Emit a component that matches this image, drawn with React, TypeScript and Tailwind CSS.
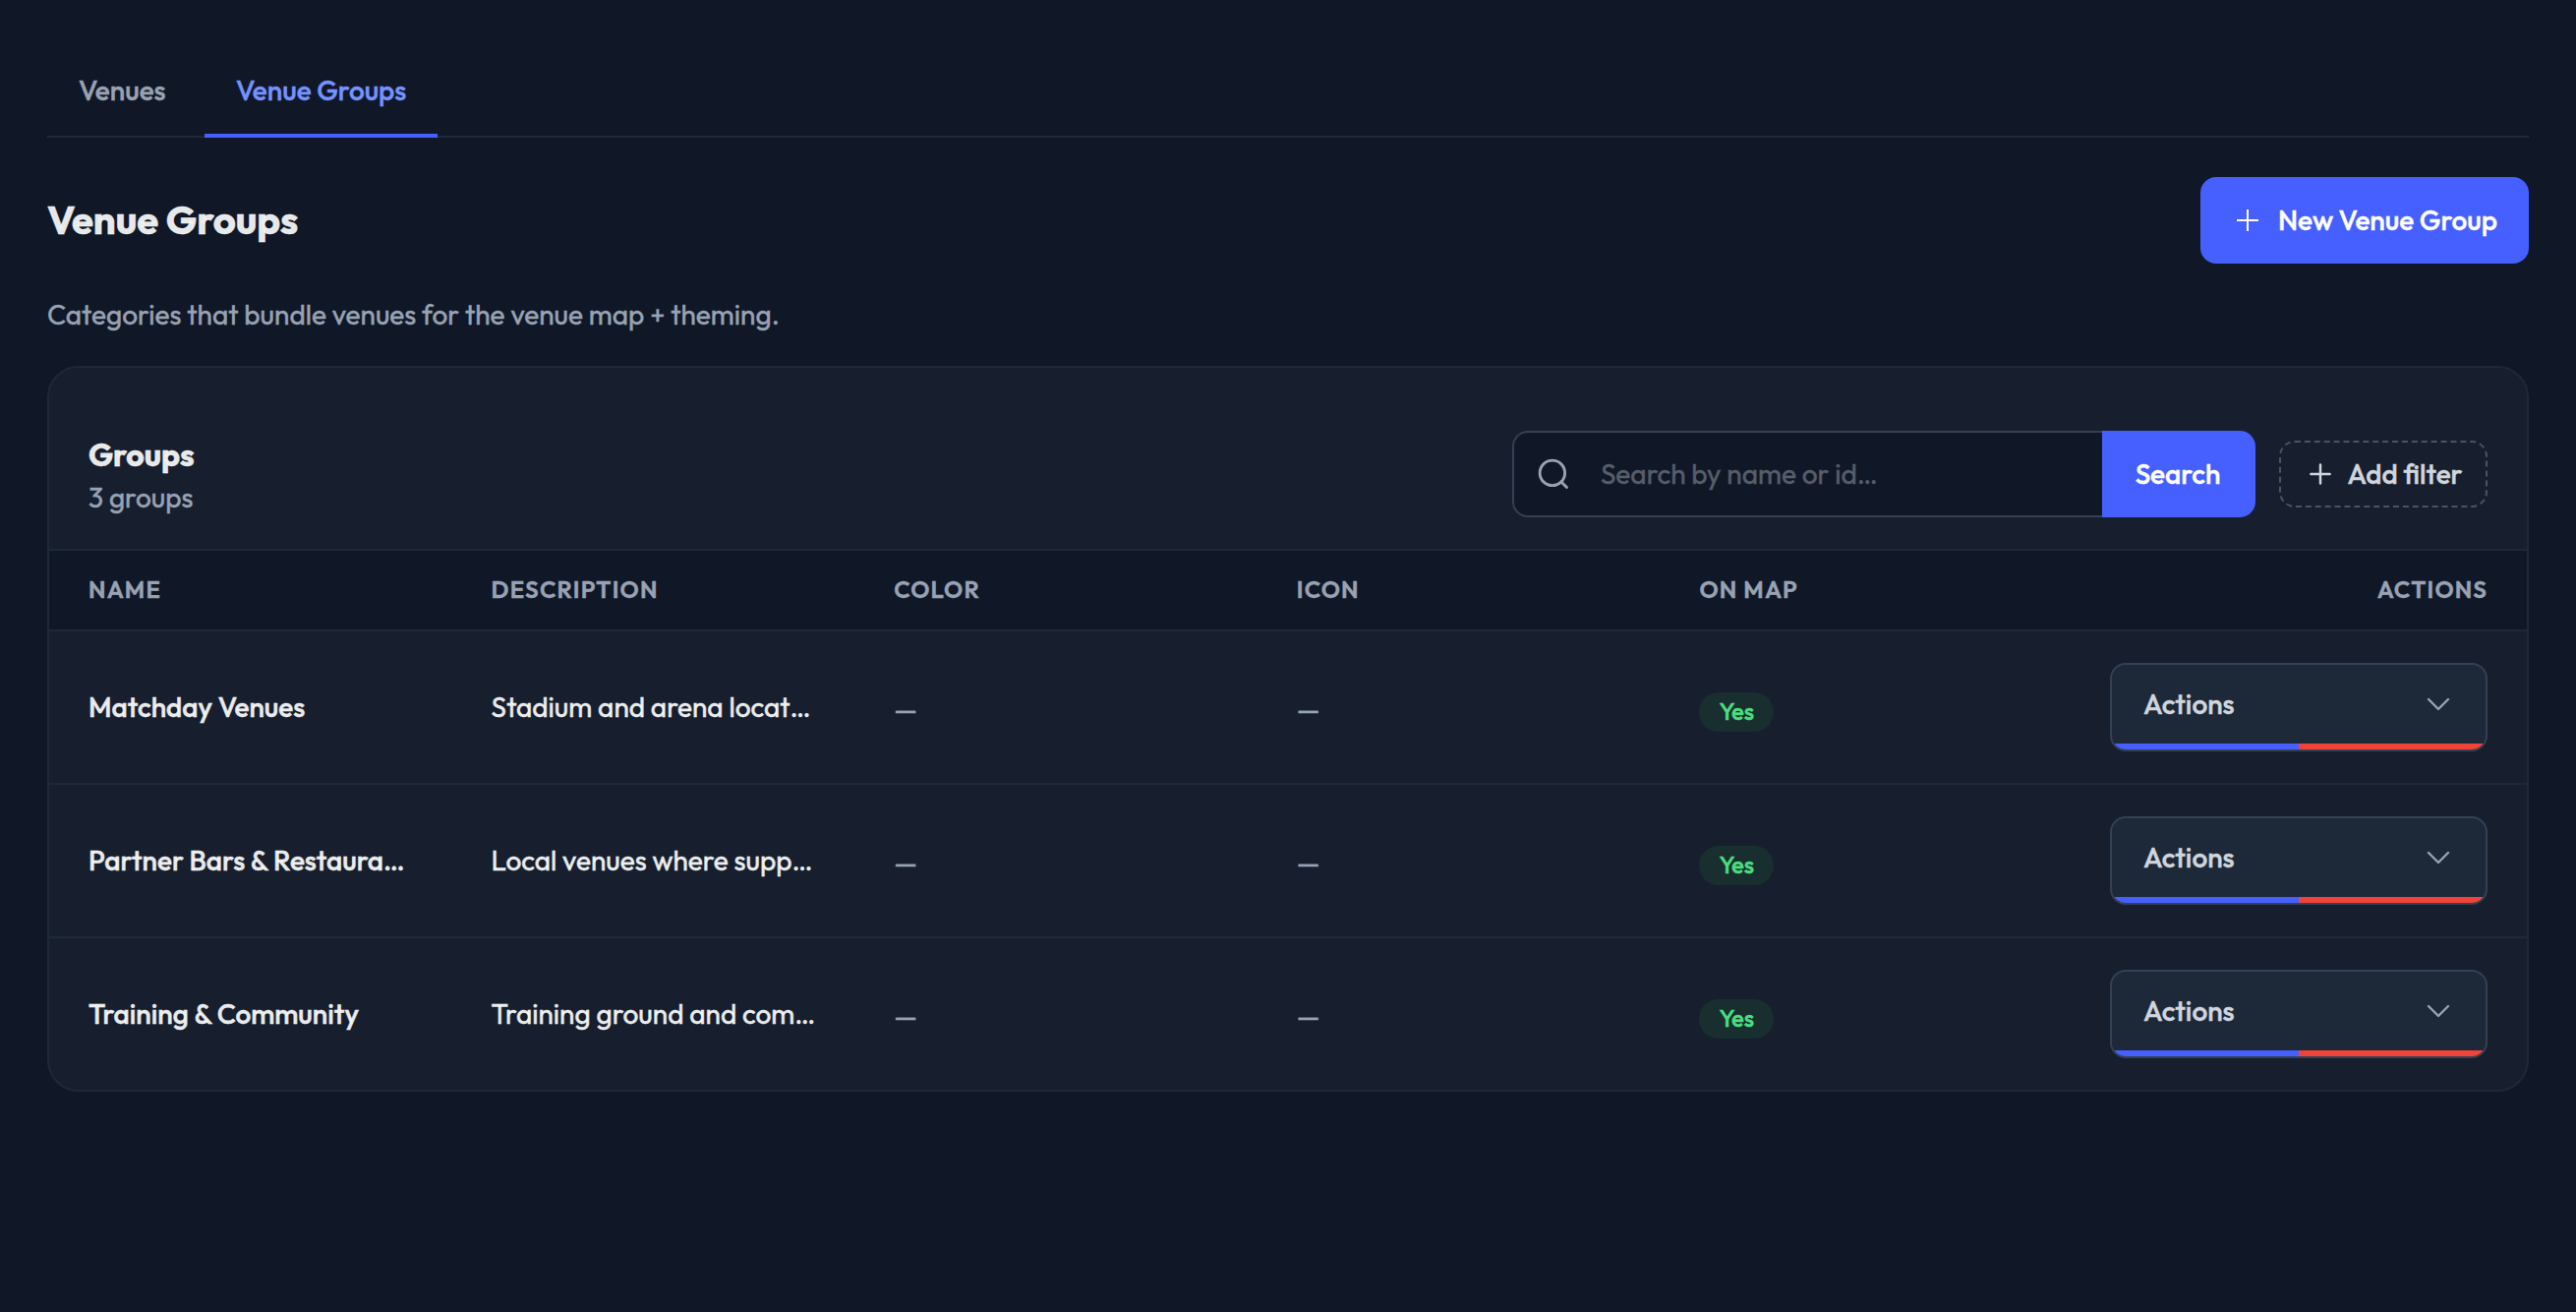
import type { ReactNode } from "react"

const tabs = [
  { label: "Venues", active: false },
  { label: "Venue Groups", active: true },
]

const groups = [
  { name: "Matchday Venues", description: "Stadium and arena locat…" },
  { name: "Partner Bars & Restaura…", description: "Local venues where supp…" },
  { name: "Training & Community", description: "Training ground and com…" },
]

const columns = ["Name", "Description", "Color", "Icon", "On map"]

function PlusIcon({ round = false }: { round?: boolean }) {
  return (
    <svg
      className="size-8 shrink-0"
      viewBox="0 0 32 32"
      fill="none"
      stroke="currentColor"
      strokeWidth={round ? 2.5 : 2}
    >
      <path d={round ? "M16 6.4v19.2M6.4 16h19.2" : "M16 5v22M5 16h22"} strokeLinecap={round ? "round" : "butt"} />
    </svg>
  )
}

function SearchIcon() {
  return (
    <svg className="size-9 shrink-0 text-[#98a2b3]" viewBox="0 0 20 20" fill="none" stroke="currentColor" strokeWidth="1.6">
      <circle cx="9.375" cy="9.375" r="7.083" />
      <path d="M14.4 14.4l3.1 3.1" strokeLinecap="round" />
    </svg>
  )
}

function ChevronDown() {
  return (
    <svg className="size-8 shrink-0 text-[#98a2b3]" viewBox="0 0 24 24" fill="none" stroke="currentColor" strokeWidth="1.8">
      <path d="m19.5 8.25-7.5 7.5-7.5-7.5" strokeLinecap="round" strokeLinejoin="round" />
    </svg>
  )
}

function ActionsButton() {
  return (
    <button className="relative flex h-[90px] w-[384px] items-center justify-between overflow-hidden rounded-2xl border-2 border-[#344054] bg-[#1d2939] px-8 pb-1.5 font-medium text-[#d0d5dd]">
      Actions
      <ChevronDown />
      <span className="absolute inset-x-0 bottom-0 flex h-1.5">
        <span className="flex-1 bg-[#465fff]" />
        <span className="flex-1 bg-[#f04438]" />
      </span>
    </button>
  )
}

function Cell({ children, className = "" }: { children: ReactNode; className?: string }) {
  return <div className={`flex items-center px-10 whitespace-nowrap ${className}`}>{children}</div>
}

export default function App() {
  return (
    <div className="min-h-screen bg-[#101828] px-12 pt-12 font-['Outfit',sans-serif] text-[28px] leading-10 text-white/90 [-webkit-text-stroke:0.4px]">
      {/* Tabs */}
      <nav className="flex h-[92px] gap-[7.4px] border-b-2 border-[#1d2939]">
        {tabs.map((tab) => (
          <button
            key={tab.label}
            className={
              tab.active
                ? "-mb-0.5 border-b-4 border-[#465fff] px-8 font-medium text-[#7592ff]"
                : "-mb-0.5 border-b-4 border-transparent px-8 font-medium text-[#98a2b3]"
            }
          >
            {tab.label}
          </button>
        ))}
      </nav>

      {/* Page header */}
      <div className="mt-10 flex h-[88px] items-center justify-between">
        <h1 className="pb-0.5 text-[40px] leading-[56px] font-bold">Venue Groups</h1>
        <button className="flex h-[88px] w-[334px] items-center justify-center gap-[15px] rounded-2xl bg-[#465fff] font-medium whitespace-nowrap text-white">
          <PlusIcon />
          New Venue Group
        </button>
      </div>
      <p className="mt-8 text-[#98a2b3]">Categories that bundle venues for the venue map + theming.</p>

      {/* Groups card */}
      <section className="mt-8 overflow-hidden rounded-[32px] border-2 border-[#1d2939] bg-[#171f2e]">
        <header className="flex justify-between px-10 pt-16 pb-8">
          <div>
            <h2 className="text-[32px] leading-[48px] font-bold">Groups</h2>
            <p className="text-[#98a2b3]">3 groups</p>
          </div>
          <div className="flex items-center gap-6">
            <div className="flex h-[88px]">
              <div className="flex w-[600px] items-center gap-[30px] rounded-l-2xl border-2 border-r-0 border-[#344054] bg-[#101828] pl-[22px]">
                <SearchIcon />
                <span className="text-[#575d69]">Search by name or id…</span>
              </div>
              <button className="w-[156px] rounded-r-2xl bg-[#465fff] pr-0.5 font-medium text-white">Search</button>
            </div>
            <button className="flex h-[68px] w-[212px] items-center justify-center gap-3 rounded-2xl border-2 border-dashed border-[#475467] font-medium whitespace-nowrap text-[#d0d5dd]">
              <PlusIcon round />
              Add filter
            </button>
          </div>
        </header>

        <div className="grid h-[84px] grid-cols-[repeat(5,409.6px)_1fr] border-y-2 border-[#1d2939] bg-[#101828] pb-0.5 text-2xl font-semibold tracking-wider text-[#98a2b3] uppercase">
          {columns.map((col) => (
            <Cell key={col}>{col}</Cell>
          ))}
          <Cell className="justify-end">Actions</Cell>
        </div>

        {groups.map((group) => (
          <div
            key={group.name}
            className="grid h-[156px] grid-cols-[repeat(5,409.6px)_1fr] border-b-2 border-[#1d2939] last:h-[154px] last:border-b-0"
          >
            <Cell className="font-medium">{group.name}</Cell>
            <Cell>{group.description}</Cell>
            <Cell className="pt-1 text-[#98a2b3]">—</Cell>
            <Cell className="pt-1 text-[#98a2b3]">—</Cell>
            <Cell className="pt-2.5">
              <span className="flex h-10 items-center rounded-full bg-[#192e2f] px-5 pb-0.5 text-2xl font-medium text-[#4ade80]">
                Yes
              </span>
            </Cell>
            <Cell className="justify-end">
              <ActionsButton />
            </Cell>
          </div>
        ))}
      </section>
    </div>
  )
}
